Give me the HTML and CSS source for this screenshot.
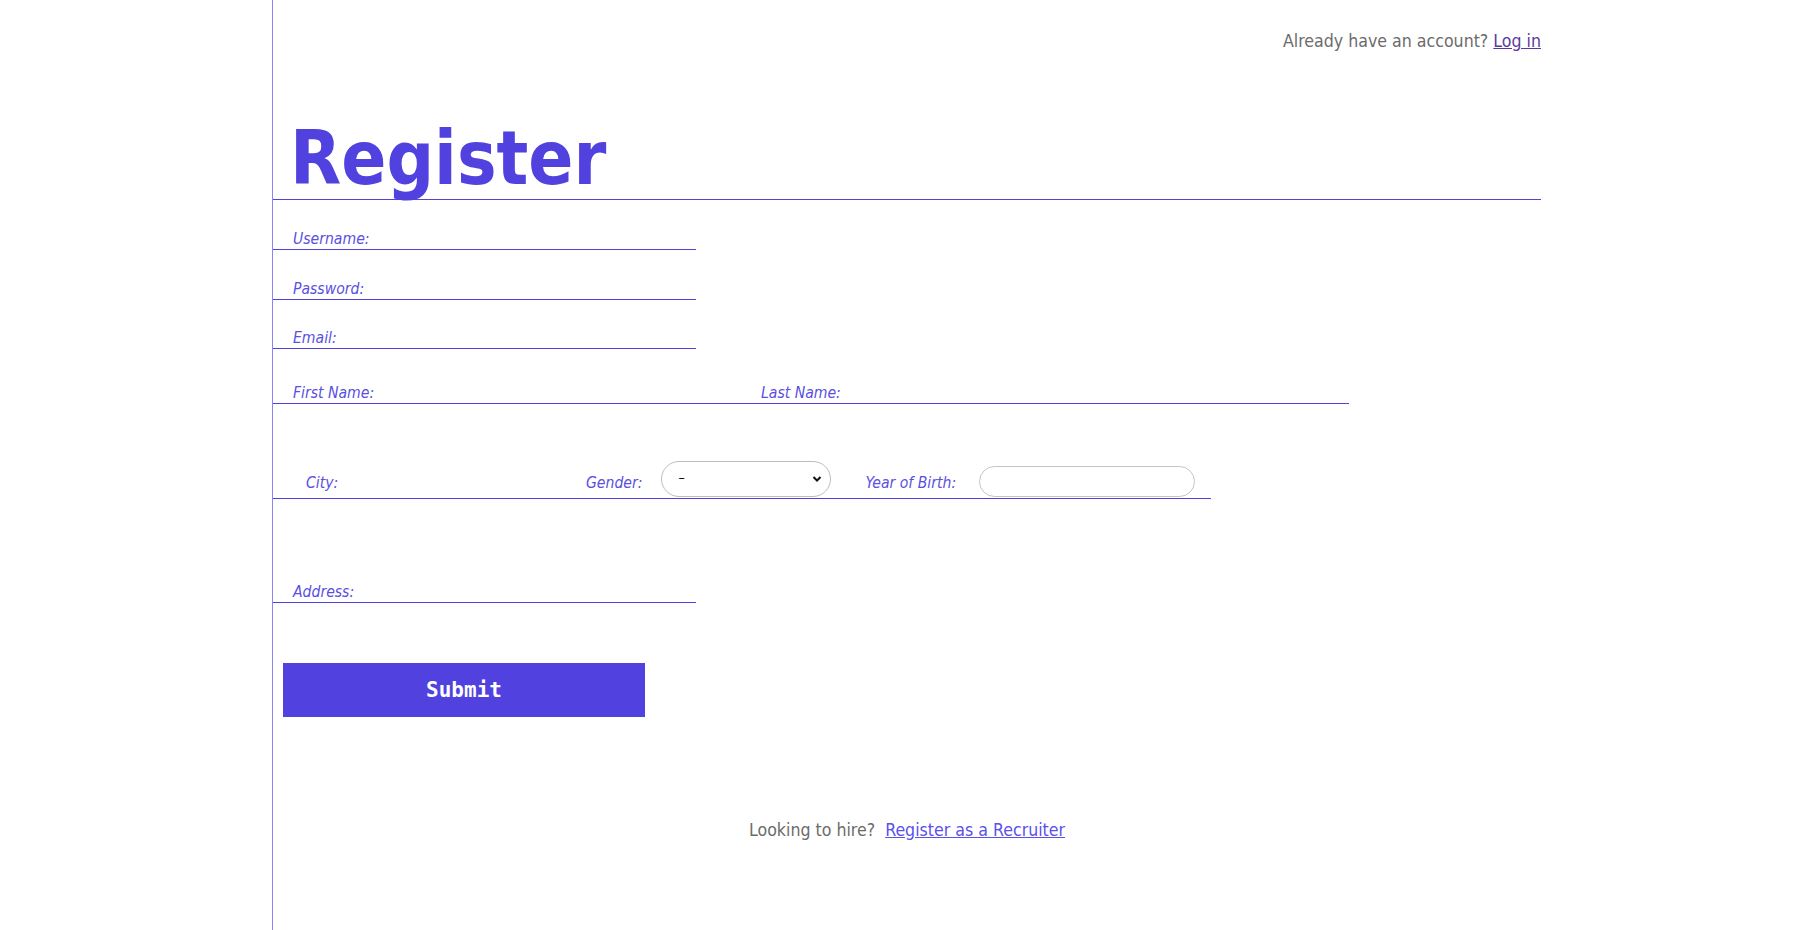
FILE: index.html
```html
<!DOCTYPE html>
<html lang="en">
<head>
<meta charset="utf-8">
<title>Register</title>
<link rel="stylesheet" href="styles.css">
</head>
<body>
<div class="page">
  <div class="topbar">Already have an account? <a class="login" href="#">Log in</a></div>
  <h1 class="title">Register</h1>
  <form class="form">
    <div class="row row-single">
      <label class="lbl">Username:</label><input class="field" type="text">
    </div>
    <div class="row row-single">
      <label class="lbl">Password:</label><input class="field" type="password">
    </div>
    <div class="row row-single row-email">
      <label class="lbl">Email:</label><input class="field" type="email">
    </div>
    <div class="row row-names">
      <div class="grp grp-first"><label class="lbl">First Name:</label><input class="field" type="text"></div>
      <div class="grp grp-last"><label class="lbl">Last Name:</label><input class="field" type="text"></div>
    </div>
    <div class="row row-city">
      <div class="grp grp-city"><label class="lbl">City:</label><input class="field" type="text"></div>
      <div class="grp grp-gender"><label class="lbl">Gender:</label>
        <div class="select">
          <span class="select-val">–</span>
          <svg class="chev" width="10" height="8" viewBox="0 0 10 8"><path d="M1.5 2 L5 5.5 L8.5 2" fill="none" stroke="#111" stroke-width="2"/></svg>
        </div>
      </div>
      <div class="grp grp-year"><label class="lbl">Year of Birth:</label><input class="year" type="text"></div>
    </div>
    <div class="row row-address">
      <label class="lbl">Address:</label><input class="field" type="text">
    </div>
    <button class="submit" type="button">Submit</button>
  </form>
  <div class="footer">Looking to hire?&nbsp; <a class="recruiter" href="#">Register as a Recruiter</a></div>
</div>
</body>
</html>
```
FILE: styles.css
```css
html, body {
  margin: 0;
  padding: 0;
  background: #ffffff;
}
body {
  font-family: "DejaVu Sans Condensed", "DejaVu Sans", sans-serif;
  font-stretch: semi-condensed;
}
.page {
  margin-left: 272px;
  width: 1269px;
  min-height: 930px;
  border-left: 1.5px solid #8b83f7;
  box-sizing: border-box;
}
.topbar {
  padding-top: 30px;
  font-size: 17.6px;
  line-height: 22px;
  color: #6b6b6b;
  text-align: right;
}
.login {
  color: #5b3a9e;
}
.title {
  margin: 69px 0 0 0;
  padding: 0 0 3px 17px;
  font-size: 74px;
  line-height: 75px;
  font-weight: bold;
  color: #5142e0;
  border-bottom: 1px solid #5142e0;
}
.form {
  margin: 0;
}
.row {
  display: flex;
  align-items: flex-end;
  border-bottom: 1px solid #5142e0;
  box-sizing: border-box;
}
.row-single {
  width: 423px;
  height: 50px;
  padding: 0 0 1px 20px;
}
.row-email {
  height: 49px;
}
.row-names {
  width: 1076px;
  height: 55px;
  padding: 0 0 1px 20px;
}
.row-city {
  width: 938px;
  height: 95px;
  padding: 0;
}
.row-address {
  width: 423px;
  height: 104px;
  padding: 0 0 1px 20px;
}
.lbl {
  font-size: 15.6px;
  line-height: 18px;
  font-style: italic;
  color: #5a4fe2;
  white-space: nowrap;
}
.field {
  border: none;
  outline: none;
  background: transparent;
  flex: 1;
  min-width: 0;
  height: 18px;
  padding: 0;
}
.grp {
  display: flex;
  align-items: flex-end;
}
.grp-first {
  width: 468px;
}
.grp-last {
  flex: 1;
}
.grp-city {
  width: 280px;
  padding-left: 33px;
  padding-bottom: 6px;
}
.grp-gender {
  gap: 19px;
}
.grp-gender .lbl, .grp-year .lbl {
  padding-bottom: 6px;
}
.select {
  width: 170px;
  height: 36px;
  box-sizing: border-box;
  border: 1px solid #bdbdbd;
  border-radius: 18px;
  display: flex;
  align-items: center;
  justify-content: space-between;
  padding: 0 8px 0 16px;
  margin-bottom: 1px;
  font-family: "DejaVu Sans", sans-serif;
  font-size: 14px;
  color: #111;
}
.select-val {
  margin-top: -4px;
}
.grp-year {
  margin-left: 34px;
  gap: 23px;
}
.year {
  width: 216px;
  height: 31px;
  box-sizing: border-box;
  border: 1px solid #c4c4c4;
  border-radius: 16px;
  outline: none;
  background: #fff;
  margin-bottom: 1px;
}
.submit {
  display: block;
  margin: 60px 0 0 10px;
  width: 362px;
  height: 54px;
  border: none;
  background: #5142e0;
  color: #ffffff;
  font-family: "DejaVu Sans Mono", monospace;
  font-size: 21px;
  font-weight: bold;
  cursor: pointer;
}
.footer {
  margin-top: 102px;
  text-align: center;
  font-size: 17.6px;
  line-height: 22px;
  color: #6b6b6b;
}
.recruiter {
  color: #5b50ea;
}
```
